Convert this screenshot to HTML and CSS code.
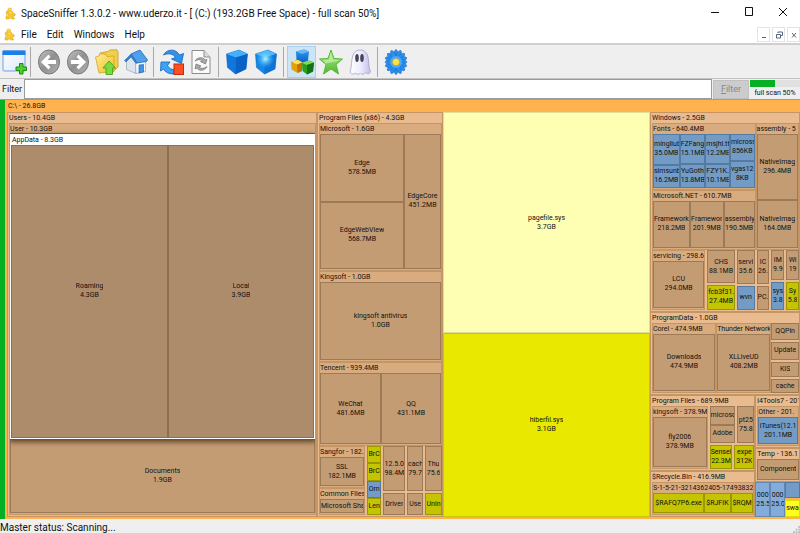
FILE: index.html
```
<!DOCTYPE html>
<html lang="en">

<head>
    <meta charset="utf-8">
    <title>SpaceSniffer</title>
    <link rel="stylesheet" href="styles.css">
</head>

<body>
    <!-- shared icon parts -->
    <svg class="defs" width="0" height="0" aria-hidden="true">
        <defs>
            <linearGradient id="gold" x1="0" y1="0" x2="1" y2="1"><stop offset="0" stop-color="#ffef9a" /><stop offset="1" stop-color="#eebd1e" /></linearGradient>
            <linearGradient id="grey" x1="0" y1="0" x2="1" y2="1"><stop offset="0" stop-color="#c4c4c4" /><stop offset=".5" stop-color="#8f8f8f" /><stop offset="1" stop-color="#b4b4b4" /></linearGradient>
            <linearGradient id="blue" x1="0" y1="0" x2="0" y2="1"><stop offset="0" stop-color="#2a9cf5" /><stop offset="1" stop-color="#0a5fc4" /></linearGradient>
            <linearGradient id="pane" x1="0" y1="0" x2="1" y2="1"><stop offset="0" stop-color="#fff" /><stop offset="1" stop-color="#dbe6fb" /></linearGradient>
            <linearGradient id="green" x1="0" y1="0" x2="0" y2="1"><stop offset="0" stop-color="#b6ec8c" /><stop offset="1" stop-color="#4db82c" /></linearGradient>
            <radialGradient id="glow"><stop offset="0" stop-color="#b8f6ff" /><stop offset="1" stop-color="#35baff" stop-opacity="0" /></radialGradient>
            <linearGradient id="ghost" x1="0" y1="0" x2="1" y2="0"><stop offset="0" stop-color="#fff" /><stop offset=".5" stop-color="#ececff" /><stop offset="1" stop-color="#c3bfe8" /></linearGradient>
            <symbol id="puzzle" viewBox="0 0 12 13">
                <path d="M3.500 4C2.500 2 3.500.5 5.200 .5C7.200.5 7.800 2.500 6.500 4.200L8.500 4.500L8.500 6.500C10 5.500 11.500 6.500 11.200 8C11 9.500 9.500 9.500 8.500 9L10.500 12.500L7 12.500C7 10.500 4.500 10.500 4.500 12.500L1 12.500L1.500 9C3 9.500 4 8 3 7L1.500 7.500L1.500 4Z" fill="#f8c82c" stroke="#e0a010" stroke-width=".6" />
                <path d="M4 2C4.500 1 6 1.200 6 2.500M5 5L7 6" fill="none" stroke="#fff0a8" />
            </symbol>
        </defs>
    </svg>

    <header class="title-bar">
        <svg class="app-icon"><use href="#puzzle" /></svg>
        <h1>SpaceSniffer 1.3.0.2 - www.uderzo.it - [ (C:) (193.2GB Free Space) - full scan 50%]</h1>
        <div class="window-buttons">
            <button aria-label="Minimize"><svg viewBox="0 0 10 10"><path d="M1 5.500H9" /></svg></button>
            <button aria-label="Maximize"><svg viewBox="0 0 10 10"><path d="M1.500 .5H8.500V8.500H1.500Z" /></svg></button>
            <button aria-label="Close"><svg viewBox="0 0 10 10"><path d="M1 1L9 9M9 1L1 9" /></svg></button>
        </div>
    </header>

    <nav class="menu-bar">
        <svg class="app-icon"><use href="#puzzle" /></svg>
        <button>File</button>
        <button>Edit</button>
        <button>Windows</button>
        <button>Help</button>
        <div class="mdi-buttons">
            <button aria-label="Minimize view"><svg viewBox="0 0 10 10"><path d="M3 7.500H7" /></svg></button>
            <button aria-label="Restore view"><svg viewBox="0 0 10 10"><path d="M4 3V2H8.500V5.500H7M2.500 4.500H6.500V8H2.500Z" /></svg></button>
            <button aria-label="Close view"><svg viewBox="0 0 10 10"><path d="M3 3L7 7.500M7 3L3 7.500" /></svg></button>
        </div>
    </nav>

    <div class="toolbar">
        <button class="new-view" aria-label="New view">
            <svg viewBox="0 0 26 26">
                <rect x="2" y="2" width="22" height="20" rx="1" fill="url(#pane)" stroke="#6fa3ec" />
                <path d="M1.500 1.500H24.500V6H1.500Z" fill="#1d7fe8" />
                <path d="M18.500 14.500H22V18H25.500V21.500H22V25H18.500V21.500H15V18H18.500Z" fill="#4fd02f" stroke="#1a8a14" />
            </svg>
        </button>
        <span class="separator"></span>
        <button aria-label="Back">
            <svg viewBox="0 0 26 26">
                <ellipse cx="13" cy="13" rx="10.500" ry="12" fill="url(#grey)" stroke="#777" />
                <path d="M5 13L12.500 5.500L14.500 8L11.500 11H20V15H11.500L14.500 18L12.500 20.500Z" fill="#fff" />
            </svg>
        </button>
        <button aria-label="Forward">
            <svg viewBox="0 0 26 26">
                <ellipse cx="13" cy="13" rx="10.500" ry="12" fill="url(#grey)" stroke="#777" />
                <path d="M21 13L13.500 5.500L11.500 8L14.500 11H6V15H14.500L11.500 18L13.500 20.500Z" fill="#fff" />
            </svg>
        </button>
        <button aria-label="Up one level">
            <svg viewBox="0 0 26 26">
                <path d="M6 4L14 2.500L15.500 1L23 .8L24 3V18L20 22H6Z" fill="#f1cf4c" stroke="#c79b1c" stroke-width=".8" />
                <path d="M1.500 8L5 7L6 4.500L12 5.500L13 7.500L20 7V22.500L5 24Z" fill="url(#gold)" stroke="#cfa526" stroke-width=".8" />
                <path d="M15 12L21.500 19H18.500V25.500H12V19H9Z" fill="#77dd3f" stroke="#3e9d1c" stroke-width=".8" />
            </svg>
        </button>
        <button aria-label="Home">
            <svg viewBox="0 0 26 26">
                <path d="M3.500 12L8 6L13 13.500V24.500L3.500 20.500Z" fill="#dde4ee" stroke="#8796aa" stroke-width=".6" />
                <path d="M12.500 13L22.500 12V22.500L13 24.500Z" fill="#f5f8fc" stroke="#8796aa" stroke-width=".6" />
                <path d="M8 5L17 1L24.500 11L23.500 12.500L14 14Z" fill="#4fa0ec" stroke="#1f66b1" stroke-width=".8" />
                <path d="M8 5L1.500 11.500L3 13L8 8L13 14.500L14 14Z" fill="#2f7fd0" stroke="#1f66b1" stroke-width=".5" />
                <path d="M16 16L20.500 15.500V23L16 24Z" fill="#3b95ec" stroke="#155a9e" stroke-width=".6" />
            </svg>
        </button>
        <span class="separator"></span>
        <button aria-label="Restart scan">
            <svg viewBox="0 0 26 26">
                <path d="M4.500 6C8-.5 17-.5 20.500 6L24.500 4.500L22.500 14.500L12.500 10L16.500 8.500C14 4.500 9.500 4 4.500 6Z" fill="#2d92ee" stroke="#1262b6" stroke-width=".8" />
                <path d="M2 13L11 13L8.500 16.500C10 19.500 12.500 20.500 15 20.500V25C10 25 6 23 4.500 20L1.500 22Z" fill="#3fa2f4" stroke="#1262b6" stroke-width=".8" />
                <rect x="15" y="15" width="9.500" height="10.500" fill="#fc5022" stroke="#c92b0d" />
            </svg>
        </button>
        <button aria-label="Refresh selection">
            <svg viewBox="0 0 26 26">
                <path d="M4 1.500H16L22 8V24.500H4Z" fill="#fafafa" stroke="#8c8c8c" />
                <path d="M16 1.500V8H22" fill="#ddd" stroke="#8c8c8c" />
                <path d="M7 12C9 8 15 7.500 17 11L19 10.500L17.500 15L12.500 12.500L14.500 12C12.500 10 9.500 10.500 7 12Z" fill="#aaa" stroke="#666" stroke-width=".6" />
                <path d="M19 17.500C17 22 11 22.500 9 19L7 20L8 15L13 17L11 18C13 20 16.500 19.500 19 17.500Z" fill="#aaa" stroke="#666" stroke-width=".6" />
            </svg>
        </button>
        <span class="separator"></span>
        <button aria-label="Less detail">
            <svg viewBox="0 0 26 26">
                <path d="M2.500 5L15 1L23.500 5L22 20L11.500 25L3.500 18.500Z" fill="#1276df" stroke="#0b55a8" stroke-width=".5" />
                <path d="M2.500 5L15 1L23.500 5L12 8.500Z" fill="#45b0fa" />
                <path d="M12 8.500L23.500 5L22 20L11.500 25Z" fill="#0a61c6" />
            </svg>
        </button>
        <button aria-label="More detail">
            <svg viewBox="0 0 26 26">
                <path d="M2.500 5L15 1L23.500 5L22 20L11.500 25L3.500 18.500Z" fill="#1686e9" stroke="#0b55a8" stroke-width=".5" />
                <path d="M2.500 5L15 1L23.500 5L12 8.500Z" fill="#4cb9fb" />
                <path d="M12 8.500L23.500 5L22 20L11.500 25Z" fill="#0e72d6" />
                <circle cx="12.500" cy="10" r="9" fill="url(#glow)" />
            </svg>
        </button>
        <span class="separator"></span>
        <button class="active" aria-label="Show free space">
            <svg viewBox="0 0 26 26">
                <path d="M7 2.500L15 .5L20 2.500L19 11.500L13 14L7.500 11Z" fill="url(#blue)" />
                <path d="M7 2.500L15 .5L20 2.500L13 5Z" fill="#69b6f7" />
                <path d="M2 12.500L9 11L13.500 13.500L13 22L8.500 24L2.500 20.500Z" fill="#e2a109" />
                <path d="M2 12.500L9 11L13.500 13.500L8 15.500Z" fill="#ffdf5c" />
                <path d="M8 15.500L13.500 13.500L13 22L8.500 24Z" fill="#b97802" />
                <path d="M13 14L20 11.500L25 13.500L24 22.500L18 25.500L13.500 22Z" fill="#2c9f1e" />
                <path d="M13 14L20 11.500L25 13.500L18 16Z" fill="#7bdd58" />
                <path d="M18 16L25 13.500L24 22.500L18 25.500Z" fill="#147510" />
            </svg>
        </button>
        <button aria-label="Show tagged">
            <svg viewBox="0 0 26 26">
                <path d="M13 1L16 9.500L24.500 10L18 15.500L20.500 25L13 20L5.500 25L8 15.500L1.500 10L10 9.500Z" fill="url(#green)" stroke="#55b83b" />
                <path d="M13 3.500L15 10.500L21.500 11C17 13.500 10 13 5 15.500L8.500 15L4.500 11L11 10.500Z" fill="#d8f6c3" opacity=".6" />
            </svg>
        </button>
        <button aria-label="Show hidden">
            <svg viewBox="0 0 26 26">
                <path d="M3 23C5 17 4 12 6 6C8.500-.8 18-.8 20.500 6C22.500 12 21 17 23.500 23C22 25.500 20 25 18.500 23.500C17 26 14.500 25.500 13.500 24C12 26 10 25.500 9 24C7 25.500 4 25.500 3 23Z" fill="url(#ghost)" stroke="#a5a1c8" stroke-width=".8" />
                <ellipse cx="10" cy="9" rx="1.800" ry="4" fill="#45455a" />
                <ellipse cx="15" cy="9" rx="1.800" ry="4" fill="#45455a" />
            </svg>
        </button>
        <span class="separator"></span>
        <button aria-label="Configure">
            <svg viewBox="0 0 26 26">
                <g fill="#2a90ee" stroke="#1465be" stroke-width=".5">
                    <ellipse cx="13" cy="13" rx="3" ry="12.500" />
                    <ellipse cx="13" cy="13" rx="3" ry="12.500" transform="rotate(22 13 13)" />
                    <ellipse cx="13" cy="13" rx="3" ry="12" transform="rotate(45 13 13)" />
                    <ellipse cx="13" cy="13" rx="3" ry="11.500" transform="rotate(68 13 13)" />
                    <ellipse cx="13" cy="13" rx="3" ry="11" transform="rotate(90 13 13)" />
                    <ellipse cx="13" cy="13" rx="3" ry="11.500" transform="rotate(112 13 13)" />
                    <ellipse cx="13" cy="13" rx="3" ry="12" transform="rotate(135 13 13)" />
                    <ellipse cx="13" cy="13" rx="3" ry="12.500" transform="rotate(158 13 13)" />
                </g>
                <circle cx="13" cy="13" r="6" fill="#49a9f6" />
                <circle cx="13" cy="13" r="3.500" fill="#ffe24a" stroke="#d5a31a" stroke-width=".6" />
            </svg>
        </button>
    </div>

    <form class="filter-bar">
        <label for="filter">Filter</label>
        <input id="filter" type="text">
        <button type="button" disabled><u>F</u>ilter</button>
        <div class="scan">
            <progress id="scan-progress" value="50" max="100"></progress>
            <label for="scan-progress">full scan 50%</label>
        </div>
    </form>

    <!-- Treemap, filled in by script.js -->
    <main>
        <div class="used-space"></div>
        <section class="drive" id="map">
            <h2>C:\ - 26.8GB</h2>
        </section>
    </main>

    <footer>
        <p>Master status: Scanning...</p>
        <svg class="grip" viewBox="0 0 8 8"><path d="M6 0H8V2H6ZM3 3H5V5H3ZM6 3H8V5H6ZM0 6H2V8H0ZM3 6H5V8H3ZM6 6H8V8H6Z" /></svg>
    </footer>

    <script src="script.js"></script>
</body>

</html>
```
FILE: styles.css
```
* {
    box-sizing: border-box;
    margin: 0;
    padding: 0;
}

body {
    display: flex;
    flex-direction: column;
    height: 100vh;
    overflow: hidden;
    background: #efefef;
    color: #111;
    font-family: Roboto, "Liberation Sans", sans-serif;
    font-size: 10px;
}

button,
input {
    font: inherit;
    color: inherit;
    border: 0;
    background: none;
}

h1,
h2,
h3 {
    font-size: inherit;
    font-weight: normal;
}

.defs {
    position: absolute;
}

/* title and menu */
.title-bar,
.menu-bar {
    display: flex;
    align-items: center;
    background: white;
    flex: none;
}

.title-bar {
    height: 26px;
    padding-left: 5px;
}

.title-bar h1 {
    flex: 1;
    white-space: nowrap;
}

.app-icon {
    width: 11px;
    height: 13px;
    margin-right: 5px;
}

.window-buttons {
    display: flex;
}

.window-buttons button {
    width: 34px;
    height: 24px;
}

.window-buttons svg {
    width: 10px;
    height: 10px;
    fill: none;
    stroke: #111;
}

.menu-bar {
    height: 19px;
    padding-left: 4px;
    border-bottom: 2px solid #cfcfcf;
}

.menu-bar > button {
    margin-left: 1px;
    margin-right: 9px;
}

.mdi-buttons {
    display: flex;
    gap: 2px;
    margin-left: auto;
}

.mdi-buttons button {
    display: flex;
    width: 13px;
    height: 15px;
    align-items: center;
    justify-content: center;
    border: 1px solid #e4e4e4;
}

.mdi-buttons svg {
    width: 10px;
    height: 10px;
    flex: none;
    fill: none;
    stroke: #53657e;
}

/* toolbar */
.toolbar {
    display: flex;
    align-items: center;
    height: 34px;
    flex: none;
    border-bottom: 1px solid #c3c3c3;
}

.toolbar button {
    display: flex;
    align-items: center;
    justify-content: center;
    width: 29px;
    height: 32px;
    flex: none;
}

.toolbar .new-view {
    width: 27px;
}

.toolbar svg {
    width: 26px;
    height: 26px;
}

.toolbar .active {
    background: #cce4f7;
    outline: 1px solid #a6d0f2;
    outline-offset: -1px;
}

.separator {
    width: 1px;
    height: 30px;
    margin: 0 3px;
    background: #a8a8a8;
}

/* filter */
.filter-bar {
    display: flex;
    align-items: center;
    height: 20px;
    flex: none;
}

.filter-bar > label {
    width: 24px;
    flex: none;
    padding-left: 2px;
    font-size: 9px;
}

.filter-bar input {
    flex: 1;
    min-width: 0;
    height: 20px;
    border: 1px solid #9a9a9a;
    background: white;
}

.filter-bar button {
    width: 36px;
    height: 19px;
    margin: 0 1px;
    background: #ccc;
    border: 1px solid #c0c0c0;
    color: #888;
    font-size: 9px;
}

.scan {
    width: 50px;
    text-align: center;
    font-size: 7px;
    line-height: 12px;
    white-space: nowrap;
}

.scan progress {
    display: block;
    width: 100%;
    height: 7px;
    appearance: none;
    border: 0;
}

.scan progress::-webkit-progress-bar {
    background: #e0e0e0;
}

.scan progress::-webkit-progress-value {
    background: #06b025;
}

.scan label {
    display: block;
}

/* treemap */
main {
    display: flex;
    flex: 1;
    min-height: 0;
    border-top: 1px solid #d9933a;
    font-size: 7px;
    line-height: 9px;
}

.used-space {
    width: 5px;
    background: #06b025;
}

.drive {
    display: flex;
    flex-direction: column;
    flex: 1;
    min-width: 0;
    padding: 1px 0 2px 2px;
    background: #ffb24d;
}

.drive h2 {
    height: 11px;
    padding-left: 1px;
    line-height: 11px;
}

.row,
.col,
.cell,
.folder {
    display: flex;
    min-width: 0;
    min-height: 0;
}

.col,
.folder {
    flex-direction: column;
}

.spaced {
    gap: 2px;
}

.folder {
    padding-bottom: 1px;
    overflow: hidden;
    background: #d9ac80;
    border: 1px solid #c49565;
}

.folder h3 {
    height: 10px;
    flex: none;
    overflow: hidden;
    line-height: 10px;
    white-space: nowrap;
}

.top {
    padding: 0 0 1px 1px;
    background: #e9bb8f;
}

.cell {
    flex-direction: column;
    align-items: center;
    justify-content: center;
    overflow: hidden;
    background: #c49c74;
    border: 1px solid #9d7a57;
    text-align: center;
    white-space: nowrap;
}

.cell span {
    max-width: 100%;
    overflow: hidden;
    flex: none;
}

.front {
    z-index: 1;
    padding: 0;
    border: 1px solid white;
    background: white;
    box-shadow: 0 0 0 1px #6d5238, 0 2px 5px 1px #5c4226;
}

.front h3 {
    padding-left: 1px;
}

.front .cell {
    background: #ad8c6b;
    border-color: #8d7053;
}

.blue {
    background: #729cc6;
    border-color: #527aa3;
}

.lightblue {
    background: #85acd9;
    border-color: #6288b3;
}

.olive {
    background: #c5c400;
    border-color: #999800;
}

.yellow {
    background: #e8e800;
    border-color: #c8c800;
}

.bright {
    background: #ffff1a;
    border-color: #dddd00;
}

.pale {
    background: #ffffb3;
    border-color: #dede98;
}

/* status */
footer {
    display: flex;
    align-items: flex-end;
    justify-content: space-between;
    height: 14px;
    flex: none;
    overflow: hidden;
    line-height: 10px;
    white-space: nowrap;
}

.grip {
    width: 7px;
    height: 7px;
    fill: #b8b8b8;
}
```
FILE: script.js
```
// span is the share of the parent's width (in a row) or height (in a column)
const cell = (span, name, size, colour = "") => ({ type: "cell " + colour, span, name, size });
const folder = (span, title, child, look = "") => ({ type: "folder " + look, span, title, children: [child] });
const row = (span, ...children) => ({ type: "row", span, children });
const col = (span, ...children) => ({ type: "col", span, children });
const spaced = (group) => ({ ...group, type: group.type + " spaced" });

const users = folder(310, "Users - 10.4GB",
    folder(1, "User - 10.3GB", col(1,
        folder(308, "AppData - 8.3GB", row(1,
            cell(157, "Roaming", "4.3GB"),
            cell(146, "Local", "3.9GB")
        ), "front"),
        cell(75, "Documents", "1.9GB")
    )), "top");

const programs86 = folder(126, "Program Files (x86) - 4.3GB", col(1,
    folder(148, "Microsoft - 1.6GB", row(1,
        col(84, cell(67, "Edge", "578.5MB"), cell(66, "EdgeWebView", "568.7MB")),
        cell(37, "EdgeCore", "451.2MB")
    )),
    folder(92, "Kingsoft - 1.0GB", row(1, cell(1, "kingsoft antivirus", "1.0GB"))),
    folder(84, "Tencent - 939.4MB", row(1,
        cell(61, "WeChat", "481.6MB"),
        cell(60, "QQ", "431.1MB")
    )),
    spaced(row(69,
        col(47,
            folder(42, "Sangfor - 182.", row(1, cell(1, "SSL", "182.1MB"))),
            folder(27, "Common Files", row(1, cell(1, "Microsoft Sha")))
        ),
        col(15, cell(17, "BrC", "", "olive"), cell(17, "BrC", "", "olive"), cell(17, "Om", "", "blue"), cell(17, "Len", "", "olive")),
        spaced(col(60,
            spaced(row(45, cell(23, "12.5.0", "98.4M"), cell(17, "cach", "79.7"), cell(18, "Thu", "75.6"))),
            spaced(row(22, cell(23, "Driver"), cell(17, "Use"), cell(18, "Unin", "", "olive")))
        ))
    ))
), "top");

const bigFiles = col(207,
    cell(222, "pagefile.sys", "3.7GB", "pale"),
    cell(184, "hiberfil.sys", "3.1GB", "yellow")
);

const windows = folder(200, "Windows - 2.5GB", col(1,
    row(126,
        col(105,
            folder(66, "Fonts - 640.4MB", row(1,
                col(27, cell(30, "mingliub", "35.0MB", "blue"), cell(22, "simsunb", "16.2MB", "blue")),
                col(26, cell(29, "FZFang", "15.1MB", "blue"), cell(23, "YuGoth", "13.8MB", "blue")),
                col(25, cell(29, "msjhl.tt", "12.2ME", "blue"), cell(23, "FZY1K.", "10.1ME", "blue")),
                col(25, cell(26, "micross", "856KB", "blue"), cell(26, "vgas12", "8KB", "blue"))
            )),
            folder(60, "Microsoft.NET - 610.7MB", row(1,
                cell(37, "Framework", "218.2MB"),
                cell(34, "Framewor", "201.9MB"),
                cell(31, "assembly", "190.5MB")
            ))
        ),
        folder(44, "assembly - 5", col(1,
            cell(66, "NativeImag", "296.4MB"),
            cell(48, "NativeImag", "164.0MB")
        ))
    ),
    spaced(row(59,
        folder(54, "servicing - 298.6", row(1, cell(1, "LCU", "294.0MB"))),
        spaced(col(28, cell(32, "CHS", "88.1MB"), cell(23, "fcb3f31.", "27.4MB", "olive"))),
        spaced(col(18, cell(32, "servi", "35.6"), cell(22, "wvn", "", "blue"))),
        spaced(col(13, cell(32, "IC", "26."), cell(22, "PC."))),
        spaced(col(13, cell(29, "IM", "9.9"), cell(26, "sys", "3.8", "blue"))),
        spaced(col(13, cell(29, "Wi", "19"), cell(26, "Sy", "5.8", "olive")))
    ))
), "top");

const programData = folder(84, "ProgramData - 1.0GB", row(1,
    folder(65, "Corel - 474.9MB", row(1, cell(1, "Downloads", "474.9MB"))),
    folder(56, "Thunder Network", row(1, cell(1, "XLLiveUD", "408.2MB"))),
    spaced(col(28, cell(17, "QQPin"), cell(18, "Update"), cell(15, "KIS"), cell(14, "cache")))
), "top");

const rest = row(122,
    col(106,
        folder(76, "Program Files - 689.9MB", spaced(row(1,
            folder(56, "kingsoft - 378.9M", row(1, cell(1, "fly2006", "378.9MB"))),
            spaced(col(45,
                spaced(row(36, col(26, cell(18, "microsc"), cell(17, "Adobe")), cell(17, "pt25", "75.8"))),
                spaced(row(24, cell(23, "Sensel", "22.3M", "olive"), cell(20, "expe", "312K", "olive")))
            ))
        )), "top"),
        folder(46, "$Recycle.Bin - 416.9MB",
            folder(1, "S-1-5-21-3214362405-174938329", row(1,
                cell(52, "$RAFQ7P6.exe", "", "olive"),
                cell(27, "$RJFIK", "", "olive"),
                cell(23, "$RQM", "", "olive")
            )), "top")
    ),
    col(45,
        folder(53, "i4Tools7 - 201",
            folder(1, "Other - 201.", row(1, cell(1, "iTunes(12.1", "201.1MB", "blue"))), "top"),
        folder(34, "Temp - 136.1", row(1, cell(1, "Component")), "top"),
        row(35,
            cell(15, "000", "25.5", "lightblue"),
            cell(15, "000", "25.0", "lightblue"),
            spaced(col(15, cell(15, "", "", "blue"), cell(17, "swa", "", "bright")))
        )
    )
);

const render = (node) => {
    const box = document.createElement("div");
    box.className = node.type.trim();
    box.style.flex = `${node.span} 1 ${node.span}px`;

    if (node.title) {
        const title = document.createElement("h3");
        title.textContent = node.title;
        box.append(title);
    }

    [node.name, node.size].filter(Boolean).forEach((text) => {
        const line = document.createElement("span");
        line.textContent = text;
        box.append(line);
    });

    (node.children || []).forEach((child) => box.append(render(child)));
    return box;
};

document.getElementById("map").append(render(
    row(1, users, programs86, bigFiles, col(150, windows, programData, rest))
));
```
